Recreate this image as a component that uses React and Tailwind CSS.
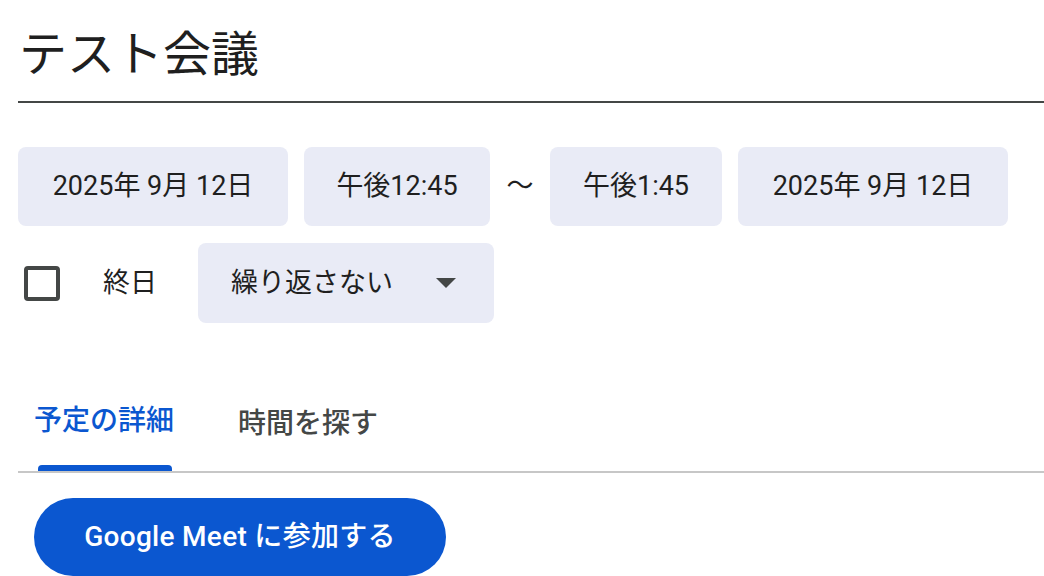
import React from 'react';

const font = { fontFamily: '"Roboto", "Noto Sans CJK JP", sans-serif' };

function Chip({ children, className = '' }) {
  return (
    <div className={`h-[79px] rounded-[8px] bg-[#e9ebf6] flex items-center justify-center text-[27px] text-[#1f1f1f] ${className}`}>
      {children}
    </div>
  );
}

export default function App() {
  return (
    <div className="w-[1044px] h-[576px] overflow-hidden bg-white pl-[18px]" style={font}>
      {/* Title */}
      <div className="h-[101px] pt-[27px]">
        <div className="text-[48px] leading-[56px] text-[#1f1f1f] pl-[1px]">テスト会議</div>
      </div>
      <div className="h-[2px] bg-[#444746]"></div>

      {/* Date / time row */}
      <div className="mt-[44px] flex items-center">
        <Chip className="w-[270px]">2025年 9月 12日</Chip>
        <Chip className="w-[186px] ml-[16px]">午後12:45</Chip>
        <div className="w-[60px] text-center text-[27px] text-[#1f1f1f]">〜</div>
        <Chip className="w-[172px]">午後1:45</Chip>
        <Chip className="w-[270px] ml-[16px]">2025年 9月 12日</Chip>
      </div>

      {/* All day / repeat */}
      <div className="mt-[17px] flex items-center h-[80px]">
        <div className="ml-[6px] w-[36px] h-[35px] rounded-[4px] border-[4px] border-[#444746]"></div>
        <div className="ml-[43px] text-[27px] text-[#1f1f1f]">終日</div>
        <div className="ml-[41px] w-[296px] h-[80px] rounded-[8px] bg-[#e9ebf6] flex items-center pl-[33px] pr-[38px]">
          <span className="text-[27px] text-[#1f1f1f]">繰り返さない</span>
          <svg className="ml-auto" width="20" height="10" viewBox="0 0 20 10">
            <path d="M0 0 L20 0 L10 10 Z" fill="#444746" />
          </svg>
        </div>
      </div>

      {/* Tabs */}
      <div className="mt-[49px] flex gap-[32px]">
        <div className="flex flex-col h-[99px] px-[16px]">
          <div className="flex-1 flex items-center pt-[4px] text-[28px] font-medium text-[#0b57d0]">予定の詳細</div>
          <div className="h-[6px] ml-[4px] mr-[2px] rounded-t-[4px] bg-[#0b57d0]"></div>
        </div>
        <div className="flex flex-col h-[99px] px-[16px]">
          <div className="flex-1 flex items-center pt-[4px] text-[28px] font-medium text-[#444746]">時間を探す</div>
        </div>
      </div>
      <div className="h-[2px] bg-[#c7c7c7]"></div>

      {/* Meet button */}
      <div className="mt-[25px] ml-[16px] w-[412px] h-[78px] rounded-full bg-[#0b57d0] flex items-center justify-center text-white text-[28px] font-medium tracking-[0.3px]">
        Google Meet に参加する
      </div>
    </div>
  );
}
